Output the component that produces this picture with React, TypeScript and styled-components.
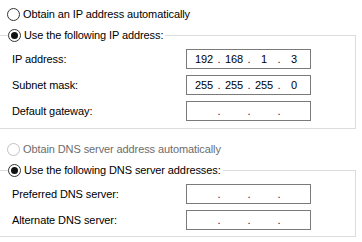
import React from "react";
import styled, { createGlobalStyle } from "styled-components";

const GlobalStyle = createGlobalStyle`
    html, body {
        margin: 0;
        padding: 0;
        background: #ffffff;
    }
    body {
        font-family: "Liberation Sans", Arial, sans-serif;
        font-size: 11px;
        letter-spacing: -0.1px;
        color: #000000;
        overflow: hidden;
    }
`;

const Page = styled.div`
    width: 362px;
    height: 242px;
    padding-top: 7px;
    box-sizing: border-box;
    display: flex;
    flex-direction: column;
`;

const RadioLine = styled.label<{ $disabled?: boolean; $top?: number; $indent?: number }>`
    display: flex;
    align-items: center;
    gap: 3px;
    height: 14px;
    line-height: 14px;
    margin-top: ${(p) => p.$top ?? 0}px;
    padding-left: ${(p) => p.$indent ?? 7}px;
    color: ${(p) => (p.$disabled ? "#6d6d6d" : "#000000")};
    white-space: nowrap;
`;

const Circle = styled.span<{ $checked?: boolean; $disabled?: boolean }>`
    width: 13px;
    height: 13px;
    box-sizing: border-box;
    border-radius: 50%;
    border: 1px solid ${(p) => (p.$disabled ? "#c2c2c2" : "#333333")};
    background: #ffffff;
    display: flex;
    align-items: center;
    justify-content: center;
    flex-shrink: 0;
    &::after {
        content: "";
        display: ${(p) => (p.$checked ? "block" : "none")};
        width: 7px;
        height: 7px;
        border-radius: 50%;
        background: #111111;
    }
`;

const GroupBox = styled.fieldset<{ $top: number; $bottom: number }>`
    margin: ${(p) => p.$top}px 0 0 -4px;
    width: 360px;
    box-sizing: border-box;
    border: 1px solid #dcdcdc;
    padding: 7px 0 ${(p) => p.$bottom}px 0;
    min-width: 0;
    display: flex;
    flex-direction: column;
    gap: 6px;
`;

const Legend = styled.legend`
    padding: 0 2px 0 0;
    margin-left: 11px;
    height: 14px;
    background: #ffffff;
`;

const Row = styled.div`
    display: flex;
    align-items: center;
    height: 20px;
    padding-left: 15px;
`;

const Label = styled.span`
    width: 174px;
    white-space: nowrap;
`;

const IpBox = styled.div`
    width: 125px;
    height: 20px;
    box-sizing: border-box;
    border: 1px solid #7a7a7a;
    display: flex;
    align-items: center;
    padding-left: 4px;
`;

const Octet = styled.span`
    width: 26px;
    text-align: center;
`;

const Dot = styled.span`
    width: 4px;
    text-align: center;
    color: #1a1040;
`;

const IpField: React.FC<{ value?: string[] }> = ({ value = ["", "", "", ""] }) => (
    <IpBox>
        {value.map((v, i) => (
            <React.Fragment key={i}>
                {i > 0 && <Dot>.</Dot>}
                <Octet>{v}</Octet>
            </React.Fragment>
        ))}
    </IpBox>
);

const Radio: React.FC<{
    checked?: boolean;
    disabled?: boolean;
    top?: number;
    indent?: number;
    children: React.ReactNode;
}> = ({ checked, disabled, top, indent, children }) => (
    <RadioLine $disabled={disabled} $top={top} $indent={indent}>
        <Circle $checked={checked} $disabled={disabled} />
        {children}
    </RadioLine>
);

export default function App() {
    return (
        <>
            <GlobalStyle />
            <Page>
                <Radio>Obtain an IP address automatically</Radio>

                <GroupBox $top={7} $bottom={7}>
                    <Legend>
                        <Radio checked indent={0}>
                            Use the following IP address:
                        </Radio>
                    </Legend>
                    <Row>
                        <Label>IP address:</Label>
                        <IpField value={["192", "168", "1", "3"]} />
                    </Row>
                    <Row>
                        <Label>Subnet mask:</Label>
                        <IpField value={["255", "255", "255", "0"]} />
                    </Row>
                    <Row>
                        <Label>Default gateway:</Label>
                        <IpField />
                    </Row>
                </GroupBox>

                <Radio disabled top={13}>
                    Obtain DNS server address automatically
                </Radio>

                <GroupBox $top={7} $bottom={6}>
                    <Legend>
                        <Radio checked indent={0}>
                            Use the following DNS server addresses:
                        </Radio>
                    </Legend>
                    <Row>
                        <Label>Preferred DNS server:</Label>
                        <IpField />
                    </Row>
                    <Row>
                        <Label>Alternate DNS server:</Label>
                        <IpField />
                    </Row>
                </GroupBox>
            </Page>
        </>
    );
}
